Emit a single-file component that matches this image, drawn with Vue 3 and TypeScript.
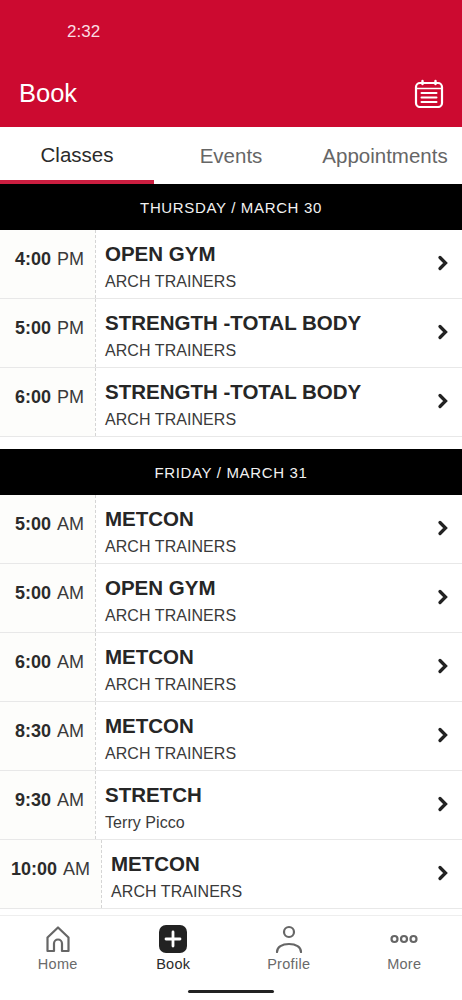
<script setup lang="ts">
interface Row { time: string; mer: string; name: string; coach: string }
interface Day { label: string; rows: Row[] }
const days: Day[] = [
  { label: 'THURSDAY / MARCH 30', rows: [
    { time: '4:00', mer: 'PM', name: 'OPEN GYM', coach: 'ARCH TRAINERS' },
    { time: '5:00', mer: 'PM', name: 'STRENGTH -TOTAL BODY', coach: 'ARCH TRAINERS' },
    { time: '6:00', mer: 'PM', name: 'STRENGTH -TOTAL BODY', coach: 'ARCH TRAINERS' },
  ] },
  { label: 'FRIDAY / MARCH 31', rows: [
    { time: '5:00', mer: 'AM', name: 'METCON', coach: 'ARCH TRAINERS' },
    { time: '5:00', mer: 'AM', name: 'OPEN GYM', coach: 'ARCH TRAINERS' },
    { time: '6:00', mer: 'AM', name: 'METCON', coach: 'ARCH TRAINERS' },
    { time: '8:30', mer: 'AM', name: 'METCON', coach: 'ARCH TRAINERS' },
    { time: '9:30', mer: 'AM', name: 'STRETCH', coach: 'Terry Picco' },
    { time: '10:00', mer: 'AM', name: 'METCON', coach: 'ARCH TRAINERS' },
  ] },
]
</script>

<template>
  <div class="app">
    <header class="header">
      <div class="status">2:32</div>
      <div class="bar">
        <h1 class="title">Book</h1>
        <svg class="cal" width="30" height="30" viewBox="0 0 30 30" fill="none" stroke="#fff" stroke-width="2.2" stroke-linecap="round">
          <rect x="2" y="5" width="26" height="24" rx="4" />
          <path d="M8.500 3v3M21.500 3v3" stroke-width="2.400" />
          <path d="M2 10.500h26" stroke-width="1.600" />
          <path d="M7.500 15h15M7.500 19.500h15M7.500 24h15" stroke-width="2" />
        </svg>
      </div>
    </header>
    <nav class="tabs">
      <div class="tab active">Classes</div>
      <div class="tab">Events</div>
      <div class="tab">Appointments</div>
    </nav>
    <main class="list">
      <section v-for="day in days" :key="day.label" class="day">
        <div class="date">{{ day.label }}</div>
        <div v-for="(r, i) in day.rows" :key="i" class="row">
          <div class="time"><span><b>{{ r.time }}</b><i class="mer">{{ r.mer }}</i></span></div>
          <div class="info">
            <div class="name">{{ r.name }}</div>
            <div class="coach">{{ r.coach }}</div>
          </div>
          <svg class="chev" width="12" height="16" viewBox="0 0 12 16" fill="none" stroke="#222" stroke-width="3.300" stroke-linecap="round" stroke-linejoin="miter">
            <path d="M3 2.500l5.500 5.500-5.500 5.500" />
          </svg>
        </div>
      </section>
    </main>
    <footer class="nav">
      <div class="item">
        <svg width="28" height="28" viewBox="0 0 28 28" fill="none" stroke="#666" stroke-width="2.200" stroke-linejoin="round">
          <path d="M3.500 26V12.500L14 2.500l10.500 10V26h-6.500v-7.500a4 4 0 0 0-8 0V26z" />
        </svg>
        <span>Home</span>
      </div>
      <div class="item on">
        <svg width="28" height="28" viewBox="0 0 28 28">
          <rect width="28" height="28" rx="7" fill="#222" />
          <path d="M14 7v14M7 14h14" stroke="#fff" stroke-width="2.800" stroke-linecap="round" />
        </svg>
        <span>Book</span>
      </div>
      <div class="item">
        <svg width="28" height="28" viewBox="0 0 28 28" fill="none" stroke="#666" stroke-width="2.200" stroke-linecap="round">
          <circle cx="14" cy="7" r="5" />
          <path d="M2 27c0-5 5-8 12-8s12 3 12 8" />
        </svg>
        <span>Profile</span>
      </div>
      <div class="item">
        <svg width="28" height="28" viewBox="0 0 28 28" fill="none" stroke="#666" stroke-width="2.200">
          <circle cx="4.500" cy="14" r="3" />
          <circle cx="14" cy="14" r="3" />
          <circle cx="23.500" cy="14" r="3" />
        </svg>
        <span>More</span>
      </div>
      <div class="home-bar"></div>
    </footer>
  </div>
</template>

<style>
html, body { margin: 0; padding: 0; background: #fff; }
</style>

<style scoped>
.app {
  width: 462px;
  height: 1000px;
  overflow: hidden;
  display: flex;
  flex-direction: column;
  font-family: "Liberation Sans", Arial, sans-serif;
  background: #fff;
  color: #222;
}
.header { height: 127px; flex: none; background: #cc0a30; color: #fff; display: flex; flex-direction: column; }
.status { padding: 22px 0 0 67px; font-size: 17px; line-height: 20px; color: #fbdde3; }
.bar { display: flex; align-items: center; justify-content: space-between; padding: 0 18px 0 19px; margin-top: 31px; height: 40px; }
.title { margin: 0; font-size: 25.500px; font-weight: 400; line-height: 32px; }
.cal { display: block; }
.tabs { height: 57px; flex: none; display: grid; grid-template-columns: repeat(3, 154px); }
.tab { display: flex; align-items: center; justify-content: center; box-sizing: border-box; font-size: 20.500px; color: #666; white-space: nowrap; }
.tab.active { color: #2b2b2b; border-bottom: 4px solid #cc1e40; padding-top: 2px; }
.list { flex: 1; min-height: 0; overflow: hidden; }
.day + .day { margin-top: 12px; }
.date { height: 46px; background: #000; color: #f2f2f2; display: flex; align-items: center; justify-content: center; font-size: 15px; letter-spacing: 0.65px; box-sizing: border-box; }
.row { height: 69px; box-sizing: border-box; display: flex; align-items: stretch; border-bottom: 1.500px solid #e8e8e8; background: #fff; }
.time { min-width: 95.500px; box-sizing: border-box; padding: 0 10.500px 10px 11px; display: flex; align-items: center; justify-content: flex-end; font-size: 18px; color: #3a3a3a; border-right: 1px dashed #d5d5d5; background: #fdfdfb; white-space: nowrap; }
.time b { color: #2b2b2b; }
.mer { font-style: normal; margin-left: 6px; }
.info { flex: 1; padding: 11px 0 0 9.500px; min-width: 0; }
.name { font-size: 20.500px; font-weight: 700; line-height: 26px; color: #262626; }
.coach { font-size: 16px; line-height: 20px; margin-top: 4.500px; color: #3a3a3a; letter-spacing: 0.06px; }
.chev { align-self: center; margin: 0 13px 2px 0; }
.nav { height: 85px; flex: none; position: relative; display: grid; grid-template-columns: repeat(4, 1fr); background: #fff; border-top: 1px solid #eee; box-sizing: border-box; }
.item { display: flex; flex-direction: column; align-items: center; padding-top: 9px; font-size: 14.500px; color: #6a6a6a; letter-spacing: 0.3px; }
.item span { margin-top: 3px; line-height: 17px; }
.item.on { color: #2b2b2b; }
.home-bar { position: absolute; left: 188px; top: 74px; width: 86px; height: 3px; border-radius: 2px; background: #222; }
</style>
